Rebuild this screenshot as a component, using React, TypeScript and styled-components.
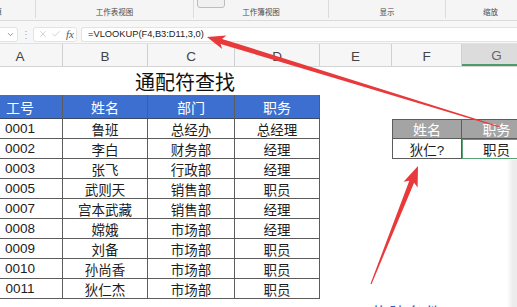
import React from "react";
import styled, { createGlobalStyle, css } from "styled-components";
import { X, Check, ChevronDown } from "lucide-react";

const GlobalStyle = createGlobalStyle`
  html, body {
    margin: 0;
    padding: 0;
    background: #fff;
  }
  body {
    font-family: "Liberation Sans", "Noto Sans CJK SC", sans-serif;
    overflow: hidden;
  }
`;

const COLS = "85px 85px 87px 85px 72px 70px 70px";

const Screen = styled.div`
  position: relative;
  width: 517px;
  height: 307px;
  overflow: hidden;
  display: flex;
  flex-direction: column;
  background: #fff;
`;

const Ribbon = styled.div`
  height: 20px;
  flex: none;
  display: flex;
  background: #f5f5f5;
  border-bottom: 1px solid #dadada;
  overflow: hidden;
`;

const RibbonGroup = styled.div<{ $w: number; $start?: boolean }>`
  width: ${p => p.$w}px;
  flex: none;
  box-sizing: border-box;
  height: 18px;
  display: flex;
  flex-direction: column;
  justify-content: space-between;
  align-items: ${p => (p.$start ? "flex-start" : "center")};
  border-right: 1px solid #dcdcdc;
`;

const RibbonTop = styled.div`
  height: 7px;
  width: 100%;
  display: flex;
`;

const RibbonButton = styled.div`
  margin: -3px 0 0 3px;
  width: 26px;
  height: 9px;
  border: 1px solid #bdbdbd;
  border-radius: 3px;
  background: #f0f0f0;
`;

const RibbonLabel = styled.span<{ $shift?: number }>`
  font-size: 7.5px;
  line-height: 9px;
  color: #4a4a4a;
  margin-left: ${p => p.$shift ?? 0}px;
  white-space: nowrap;
  padding-bottom: 1px;
`;

const FormulaBar = styled.div`
  height: 23px;
  flex: none;
  box-sizing: border-box;
  padding-top: 4px;
  display: flex;
  align-items: center;
  background: #f7f7f7;
  border-bottom: 1px solid #e2e2e2;
`;

const NameBox = styled.div`
  width: 22px;
  height: 15px;
  margin-left: -4px;
  box-sizing: border-box;
  background: #fff;
  border: 1px solid #e3e3e3;
  border-radius: 3px;
  display: flex;
  align-items: center;
  justify-content: flex-end;
  padding-right: 2px;
  color: #777;
`;

const Dots = styled.span`
  width: 15px;
  text-align: center;
  font-size: 10px;
  color: #aaa;
`;

const FxBox = styled.div`
  width: 44px;
  height: 15px;
  box-sizing: border-box;
  background: #fff;
  border: 1px solid #e3e3e3;
  border-radius: 3px;
  display: flex;
  align-items: center;
  gap: 3px;
  padding-left: 4px;
  color: #b5b5b5;
`;

const FxText = styled.span`
  font-family: "Liberation Serif", serif;
  font-style: italic;
  font-size: 11px;
  color: #555;
  margin-left: 2px;
`;

const FormulaInput = styled.div`
  flex: 1;
  height: 15px;
  margin-left: 4px;
  box-sizing: border-box;
  background: #fff;
  border: 1px solid #e3e3e3;
  border-right: none;
  border-radius: 3px 0 0 3px;
  padding-left: 6px;
  display: flex;
  align-items: center;
  font-size: 9.3px;
  color: #222;
`;

const ColumnHeaders = styled.div`
  height: 22px;
  flex: none;
  background: #f6f6f6;
  border-bottom: 1px solid #d4d4d4;
  overflow: hidden;
`;

const HeaderGrid = styled.div`
  display: grid;
  grid-template-columns: ${COLS};
  height: 100%;
  margin-left: -22px;
`;

const ColumnLetter = styled.div<{ $selected?: boolean }>`
  display: flex;
  align-items: center;
  justify-content: center;
  font-size: 13.5px;
  color: ${p => (p.$selected ? "#666" : "#444")};
  border-right: 1px solid #d0d0d0;
  box-sizing: border-box;
  padding-top: 3px;
  ${p =>
    p.$selected &&
    css`
      background: #dcdcdc;
      border-bottom: 2px solid #4f9a6b;
    `}
`;

const SheetArea = styled.div`
  flex: 1;
  overflow: hidden;
`;

const SheetGrid = styled.div`
  display: grid;
  grid-template-columns: ${COLS};
  grid-template-rows: 28px 24px repeat(9, 20px) 1fr;
  height: 100%;
  margin-left: -22px;
`;

type Kind = "blank" | "title" | "blue" | "data" | "gray";

const Cell = styled.div<{
  $kind: Kind;
  $span?: number;
  $left?: boolean;
  $top?: boolean;
  $selected?: boolean;
}>`
  box-sizing: border-box;
  display: flex;
  align-items: center;
  justify-content: center;
  white-space: nowrap;
  grid-column: span ${p => p.$span ?? 1};
  ${p =>
    p.$kind === "title" &&
    css`
      font-size: 20px;
      color: #111;
      padding-top: 1px;
    `}
  ${p =>
    p.$kind !== "blank" &&
    p.$kind !== "title" &&
    css`
      border-right: 1px solid #5c5c5c;
      border-bottom: 1px solid #5c5c5c;
      font-size: 13.5px;
      color: #1d1d1d;
    `}
  ${p =>
    p.$kind === "blue" &&
    css`
      background: #3c6fd0;
      color: #fff;
      font-size: 14px;
      border-bottom-color: #3a4a66;
    `}
  ${p =>
    p.$kind === "gray" &&
    css`
      background: #a4a4a4;
      color: #fff;
      font-size: 14px;
    `}
  ${p => p.$left && "border-left: 1px solid #5c5c5c;"}
  ${p => p.$top && "border-top: 1px solid #5c5c5c;"}
  ${p =>
    p.$selected &&
    css`
      outline: 1px solid #5aa276;
      outline-offset: -1px;
    `}
`;

const Overlay = styled.svg`
  position: absolute;
  left: 0;
  top: 0;
  pointer-events: none;
`;

const Caption = styled.div`
  position: absolute;
  left: 372px;
  top: 300px;
  font-size: 17px;
  color: #2f5cd6;
  letter-spacing: 0.5px;
  white-space: nowrap;
`;

const EdgeShade = styled.div`
  position: absolute;
  right: 0;
  top: 160px;
  bottom: 0;
  width: 10px;
  background: linear-gradient(to right, rgba(238, 238, 238, 0), #ececec 60%);
`;

const rows = [
  ["0001", "鲁班", "总经办", "总经理"],
  ["0002", "李白", "财务部", "经理"],
  ["0003", "张飞", "行政部", "经理"],
  ["0005", "武则天", "销售部", "职员"],
  ["0007", "宫本武藏", "销售部", "经理"],
  ["0008", "嫦娥", "市场部", "经理"],
  ["0009", "刘备", "市场部", "职员"],
  ["0010", "孙尚香", "市场部", "职员"],
  ["0011", "狄仁杰", "市场部", "职员"],
];

type Pt = [number, number];

// tapered arrow: thin tail, wide neck, barbed head
function arrowPoints(tip: Pt, tail: Pt, headLen: number, headHalf: number, neckHalf: number, tailHalf: number) {
  const dx = tail[0] - tip[0];
  const dy = tail[1] - tip[1];
  const len = Math.hypot(dx, dy);
  const ux = dx / len;
  const uy = dy / len;
  const nx = -uy;
  const ny = ux;
  const bx = tip[0] + ux * headLen;
  const by = tip[1] + uy * headLen;
  const wx = tip[0] + ux * (headLen + 3);
  const wy = tip[1] + uy * (headLen + 3);
  const pts: Pt[] = [
    tip,
    [wx + nx * headHalf, wy + ny * headHalf],
    [bx + nx * neckHalf, by + ny * neckHalf],
    [tail[0] + nx * tailHalf, tail[1] + ny * tailHalf],
    [tail[0] - nx * tailHalf, tail[1] - ny * tailHalf],
    [bx - nx * neckHalf, by - ny * neckHalf],
    [wx - nx * headHalf, wy - ny * headHalf],
  ];
  return pts.map(p => `${p[0].toFixed(1)},${p[1].toFixed(1)}`).join(" ");
}

function RightTableCells(row: number) {
  if (row === 0) {
    return (
      <>
        <Cell $kind="blank" />
        <Cell $kind="gray" $left $top>姓名</Cell>
        <Cell $kind="gray" $top>职务</Cell>
      </>
    );
  }
  if (row === 1) {
    return (
      <>
        <Cell $kind="blank" />
        <Cell $kind="data" $left>狄仁?</Cell>
        <Cell $kind="data" $selected>职员</Cell>
      </>
    );
  }
  return (
    <>
      <Cell $kind="blank" />
      <Cell $kind="blank" />
      <Cell $kind="blank" />
    </>
  );
}

export default function App() {
  return (
    <Screen>
      <GlobalStyle />
      <Ribbon>
        <RibbonGroup $w={36} $start>
          <RibbonTop />
          <RibbonLabel $shift={-13}>计算</RibbonLabel>
        </RibbonGroup>
        <RibbonGroup $w={158}>
          <RibbonTop />
          <RibbonLabel>工作表视图</RibbonLabel>
        </RibbonGroup>
        <RibbonGroup $w={135}>
          <RibbonTop>
            <RibbonButton />
          </RibbonTop>
          <RibbonLabel>工作簿视图</RibbonLabel>
        </RibbonGroup>
        <RibbonGroup $w={117}>
          <RibbonTop />
          <RibbonLabel>显示</RibbonLabel>
        </RibbonGroup>
        <RibbonGroup $w={90}>
          <RibbonTop />
          <RibbonLabel>缩放</RibbonLabel>
        </RibbonGroup>
      </Ribbon>

      <FormulaBar>
        <NameBox>
          <ChevronDown size={9} strokeWidth={2} />
        </NameBox>
        <Dots>⋮</Dots>
        <FxBox>
          <X size={10} strokeWidth={1.4} />
          <Check size={10} strokeWidth={1.4} />
          <FxText>fx</FxText>
        </FxBox>
        <FormulaInput>=VLOOKUP(F4,B3:D11,3,0)</FormulaInput>
      </FormulaBar>

      <ColumnHeaders>
        <HeaderGrid>
          {["A", "B", "C", "D", "E", "F", "G"].map(l => (
            <ColumnLetter key={l} $selected={l === "G"}>
              {l}
            </ColumnLetter>
          ))}
        </HeaderGrid>
      </ColumnHeaders>

      <SheetArea>
        <SheetGrid>
          <Cell $kind="title" $span={5}>通配符查找</Cell>
          <Cell $kind="blank" />
          <Cell $kind="blank" />

          {["工号", "姓名", "部门", "职务"].map(h => (
            <Cell key={h} $kind="blue">{h}</Cell>
          ))}
          <Cell $kind="blank" />
          <Cell $kind="blank" />
          <Cell $kind="blank" />

          {rows.map((r, i) => (
            <React.Fragment key={r[0]}>
              {r.map((v, j) => (
                <Cell key={j} $kind="data">{v}</Cell>
              ))}
              {RightTableCells(i)}
            </React.Fragment>
          ))}
        </SheetGrid>
      </SheetArea>

      <EdgeShade />

      <Overlay width={517} height={307} viewBox="0 0 517 307">
        <polygon points={arrowPoints([207, 37], [500, 127], 15, 7, 2.6, 0.4)} fill="#e8393b" />
        <polygon points={arrowPoints([418, 166], [371, 284], 17, 7.5, 2.6, 0.5)} fill="#e8393b" />
      </Overlay>

      <Caption>构建条件</Caption>
    </Screen>
  );
}
